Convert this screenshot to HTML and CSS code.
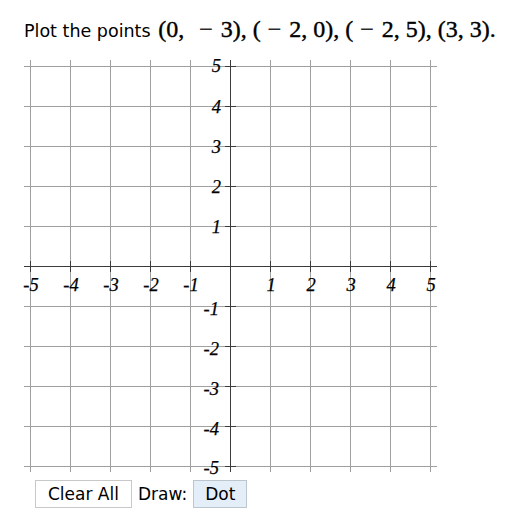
FILE: index.html
```html
<!DOCTYPE html>
<html>
<head>
<meta charset="utf-8">
<link rel="stylesheet" href="styles.css">
</head>
<body>
<div class="page">
  <p class="prompt">Plot the points <span class="math">(0,<span class="sp"></span><span class="op">−</span>3), (<span class="op">−</span>2,<span class="th"></span>0), (<span class="op">−</span>2,<span class="th"></span>5), (3,<span class="th"></span>3).</span></p>
  <svg class="board" width="413" height="412" viewBox="0 0 413 412">
    <g class="grid">
      <line x1="6.5" y1="0" x2="6.5" y2="412"/>
      <line x1="46.5" y1="0" x2="46.5" y2="412"/>
      <line x1="86.5" y1="0" x2="86.5" y2="412"/>
      <line x1="126.5" y1="0" x2="126.5" y2="412"/>
      <line x1="166.5" y1="0" x2="166.5" y2="412"/>
      <line x1="246.5" y1="0" x2="246.5" y2="412"/>
      <line x1="286.5" y1="0" x2="286.5" y2="412"/>
      <line x1="326.5" y1="0" x2="326.5" y2="412"/>
      <line x1="366.5" y1="0" x2="366.5" y2="412"/>
      <line x1="406.5" y1="0" x2="406.5" y2="412"/>
      <line x1="0" y1="6.5" x2="413" y2="6.5"/>
      <line x1="0" y1="46.5" x2="413" y2="46.5"/>
      <line x1="0" y1="86.5" x2="413" y2="86.5"/>
      <line x1="0" y1="126.5" x2="413" y2="126.5"/>
      <line x1="0" y1="166.5" x2="413" y2="166.5"/>
      <line x1="0" y1="246.5" x2="413" y2="246.5"/>
      <line x1="0" y1="286.5" x2="413" y2="286.5"/>
      <line x1="0" y1="326.5" x2="413" y2="326.5"/>
      <line x1="0" y1="366.5" x2="413" y2="366.5"/>
      <line x1="0" y1="406.5" x2="413" y2="406.5"/>
    </g>
    <g class="axis">
      <line x1="0" y1="206.5" x2="413" y2="206.5"/>
      <line x1="206.5" y1="0" x2="206.5" y2="412"/>
    </g>
    <g class="ticks">
      <line x1="6.5" y1="201" x2="6.5" y2="212"/>
      <line x1="46.5" y1="201" x2="46.5" y2="212"/>
      <line x1="86.5" y1="201" x2="86.5" y2="212"/>
      <line x1="126.5" y1="201" x2="126.5" y2="212"/>
      <line x1="166.5" y1="201" x2="166.5" y2="212"/>
      <line x1="246.5" y1="201" x2="246.5" y2="212"/>
      <line x1="286.5" y1="201" x2="286.5" y2="212"/>
      <line x1="326.5" y1="201" x2="326.5" y2="212"/>
      <line x1="366.5" y1="201" x2="366.5" y2="212"/>
      <line x1="406.5" y1="201" x2="406.5" y2="212"/>
      <line x1="201" y1="6.5" x2="212" y2="6.5"/>
      <line x1="201" y1="46.5" x2="212" y2="46.5"/>
      <line x1="201" y1="86.5" x2="212" y2="86.5"/>
      <line x1="201" y1="126.5" x2="212" y2="126.5"/>
      <line x1="201" y1="166.5" x2="212" y2="166.5"/>
      <line x1="201" y1="246.5" x2="212" y2="246.5"/>
      <line x1="201" y1="286.5" x2="212" y2="286.5"/>
      <line x1="201" y1="326.5" x2="212" y2="326.5"/>
      <line x1="201" y1="366.5" x2="212" y2="366.5"/>
      <line x1="201" y1="406.5" x2="212" y2="406.5"/>
    </g>
    <g class="xlabels">
      <text x="7" y="231">-5</text>
      <text x="47" y="231">-4</text>
      <text x="87" y="231">-3</text>
      <text x="127" y="231">-2</text>
      <text x="167" y="231">-1</text>
      <text x="247" y="231">1</text>
      <text x="287" y="231">2</text>
      <text x="327" y="231">3</text>
      <text x="367" y="231">4</text>
      <text x="407" y="231">5</text>
    </g>
    <g class="ylabels">
      <text x="197" y="12">5</text>
      <text x="197" y="53">4</text>
      <text x="197" y="93">3</text>
      <text x="197" y="133">2</text>
      <text x="197" y="173">1</text>
      <text x="195" y="255">-1</text>
      <text x="195" y="295">-2</text>
      <text x="195" y="335">-3</text>
      <text x="195" y="375">-4</text>
      <text x="195" y="414">-5</text>
    </g>
  </svg>
  <div class="controls">
    <button class="btn">Clear All</button>
    <span class="label">Draw:</span>
    <button class="btn active">Dot</button>
  </div>
</div>
</body>
</html>
```

FILE: styles.css
```css
html, body {
  margin: 0;
  padding: 0;
  background: #fff;
}
.page {
  padding: 14px 0 0 24px;
  font-family: "DejaVu Sans", Verdana, sans-serif;
  color: #000;
}
.prompt {
  margin: 0;
  height: 46px;
  font-size: 17.5px;
  line-height: 30px;
  white-space: nowrap;
}
.math {
  font-family: "Liberation Serif", "Times New Roman", serif;
  font-size: 24px;
  margin-left: 2px;
  -webkit-text-stroke: 0.4px #000;
}
.op {
  margin: 0 8px 0 7px;
}
.sp {
  display: inline-block;
  width: 8px;
}
.th {
  display: inline-block;
  width: 6px;
}
.board {
  display: block;
  overflow: visible;
}
.grid line {
  stroke: #a0a0a0;
  stroke-width: 1;
}
.axis line, .ticks line {
  stroke: #3c3c3c;
  stroke-width: 1;
}
.xlabels text, .ylabels text {
  font-family: "Liberation Serif", "Times New Roman", serif;
  font-style: italic;
  font-size: 18.5px;
  fill: #000;
  stroke: #000;
  stroke-width: 0.25px;
}
.xlabels text {
  text-anchor: middle;
}
.ylabels text {
  text-anchor: end;
}
.controls {
  display: flex;
  align-items: center;
  gap: 6px;
  margin: 8px 0 0 11px;
}
.btn {
  font-family: "DejaVu Sans", Verdana, sans-serif;
  font-size: 17px;
  height: 28px;
  padding: 0 12px;
  background: #fff;
  border: 1px solid #c8c8c8;
  border-radius: 0;
  color: #000;
}
.btn.active {
  padding: 0 11px;
  background: #e4eef9;
  border-color: #bcc4cc;
}
.label {
  font-size: 17px;
}
```
